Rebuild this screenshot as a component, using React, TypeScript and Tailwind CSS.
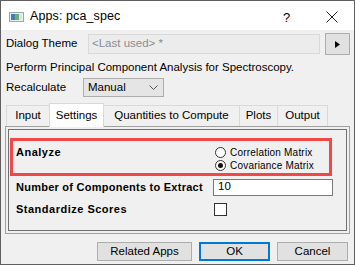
import React from "react";

const ui = { fontFamily: '"Liberation Sans", Arial, sans-serif' };

export default function App() {
  return (
    <div className="w-[355px] h-[265px] border border-[#5f5f5f] bg-[#f0f0f0] flex flex-col text-black overflow-hidden" style={ui}>
      {/* title bar */}
      <div className="h-[29px] bg-white flex items-center shrink-0 relative">
        <svg width="15" height="10" viewBox="0 0 15 10" className="ml-[8px] mt-[3px]">
          <rect x="0.5" y="0.5" width="14" height="9" fill="#e8eef2" stroke="#9aa7b0" />
          <rect x="2" y="2" width="4" height="6" fill="#3d7fb5" />
          <rect x="6" y="2" width="4" height="6" fill="#6cae6a" />
          <rect x="10" y="2" width="3" height="6" fill="#d9e6ee" />
        </svg>
        <span className="ml-[6px] mt-[2px] text-[12.5px] tracking-[0.1px]">Apps: pca_spec</span>
        <span className="absolute left-[282px] top-[7px] text-[13px]">?</span>
        <svg width="12" height="12" viewBox="0 0 12 12" className="absolute left-[325px] top-[10px]">
          <path d="M0.5 0.5 L11.5 11.5 M11.5 0.5 L0.5 11.5" stroke="#222" strokeWidth="1" />
        </svg>
      </div>

      {/* body */}
      <div className="flex flex-col flex-1 px-[4px]">
        {/* dialog theme */}
        <div className="flex items-center mt-[3px] h-[22px]">
          <span className="w-[83px] pl-[1px] text-[11.5px]">Dialog Theme</span>
          <div className="w-[232px] h-[20px] border border-[#d9d9d9] bg-[#ececec] flex items-center pl-[3px] text-[11.5px] text-[#8c8c8c]">
            &lt;Last used&gt; *
          </div>
          <div className="ml-[5px] w-[25px] h-[22px] border border-[#adadad] bg-[#e1e1e1] flex items-center justify-center">
            <svg width="5" height="7" viewBox="0 0 5 7"><path d="M0 0 L5 3.5 L0 7 Z" fill="#000" /></svg>
          </div>
        </div>

        <div className="mt-[6px] pl-[1px] text-[11.5px] leading-[13px]">Perform Principal Component Analysis for Spectroscopy.</div>

        {/* recalculate */}
        <div className="flex items-center mt-[4px] h-[19px]">
          <span className="w-[78px] pl-[1px] text-[11.5px]">Recalculate</span>
          <div className="w-[81px] h-[19px] border border-[#adadad] bg-[#e5e5e5] flex items-center justify-between pl-[4px] pr-[5px] text-[11.5px]">
            <span>Manual</span>
            <svg width="9" height="5" viewBox="0 0 9 5"><path d="M0.5 0.5 L4.5 4.5 L8.5 0.5" stroke="#555" fill="none" /></svg>
          </div>
        </div>

        {/* tabs */}
        <div className="flex items-end mt-[5px] h-[24px] pl-[1px] text-[11.5px]">
          <div className="w-[43px] h-[21px] flex items-center justify-center border-t border-l border-[#d9d9d9]">Input</div>
          <div className="w-[55px] h-[24px] flex items-center justify-center bg-white border-t border-l border-r border-[#d9d9d9] -mb-[1px] relative z-10">Settings</div>
          <div className="w-[135px] h-[21px] flex items-center justify-center border-t border-[#d9d9d9]">Quantities to Compute</div>
          <div className="w-[38px] h-[21px] flex items-center justify-center border-t border-l border-[#d9d9d9]">Plots</div>
          <div className="w-[51px] h-[21px] flex items-center justify-center border-t border-l border-r border-[#d9d9d9]">Output</div>
        </div>

        {/* panel */}
        <div className="h-[108px] border border-[#a0a0a0] p-[2px]">
          <div className="h-full border border-[#707070] pt-[8px]">
            <div className="ml-[1px] w-[322px] h-[38px] border-[3px] border-[#f04848] flex">
              <div className="w-[202px] pl-[3px] pt-[3px] text-[11px] font-bold tracking-[0.5px]">Analyze</div>
              <div className="flex flex-col pt-[6px] gap-[2px] text-[10px]">
                <div className="flex items-center h-[11px]">
                  <span className="w-[11px] h-[11px] rounded-full border border-[#333] bg-white" />
                  <span className="ml-[4px] tracking-[0.2px]">Correlation Matrix</span>
                </div>
                <div className="flex items-center h-[11px]">
                  <span className="w-[11px] h-[11px] rounded-full border border-[#333] bg-white flex items-center justify-center">
                    <span className="w-[5px] h-[5px] rounded-full bg-[#111]" />
                  </span>
                  <span className="ml-[4px] tracking-[0.2px]">Covariance Matrix</span>
                </div>
              </div>
            </div>
            <div className="flex items-center h-[18px] mt-[2px]">
              <div className="w-[204px] pl-[7px] text-[11px] font-bold tracking-[0.25px] whitespace-nowrap">Number of Components to Extract</div>
              <div className="w-[120px] h-[17px] border border-[#7a7a7a] bg-white flex items-center pl-[4px] text-[11.5px]">10</div>
            </div>
            <div className="flex items-center h-[16px] mt-[5px]">
              <div className="w-[205px] pl-[7px] text-[11px] font-bold tracking-[0.5px]">Standardize Scores</div>
              <div className="w-[13px] h-[13px] border border-[#333] bg-white" />
            </div>
          </div>
        </div>

        {/* buttons */}
        <div className="flex mt-[8px] pl-[92px] gap-[7px] text-[11.5px]">
          <div className="w-[95px] h-[19px] border border-[#adadad] bg-[#e1e1e1] flex items-center justify-center">Related Apps</div>
          <div className="w-[71px] h-[19px] border-2 border-[#0078d7] bg-[#e1e1e1] flex items-center justify-center">OK</div>
          <div className="w-[71px] h-[19px] border border-[#adadad] bg-[#e1e1e1] flex items-center justify-center">Cancel</div>
        </div>
      </div>
    </div>
  );
}
